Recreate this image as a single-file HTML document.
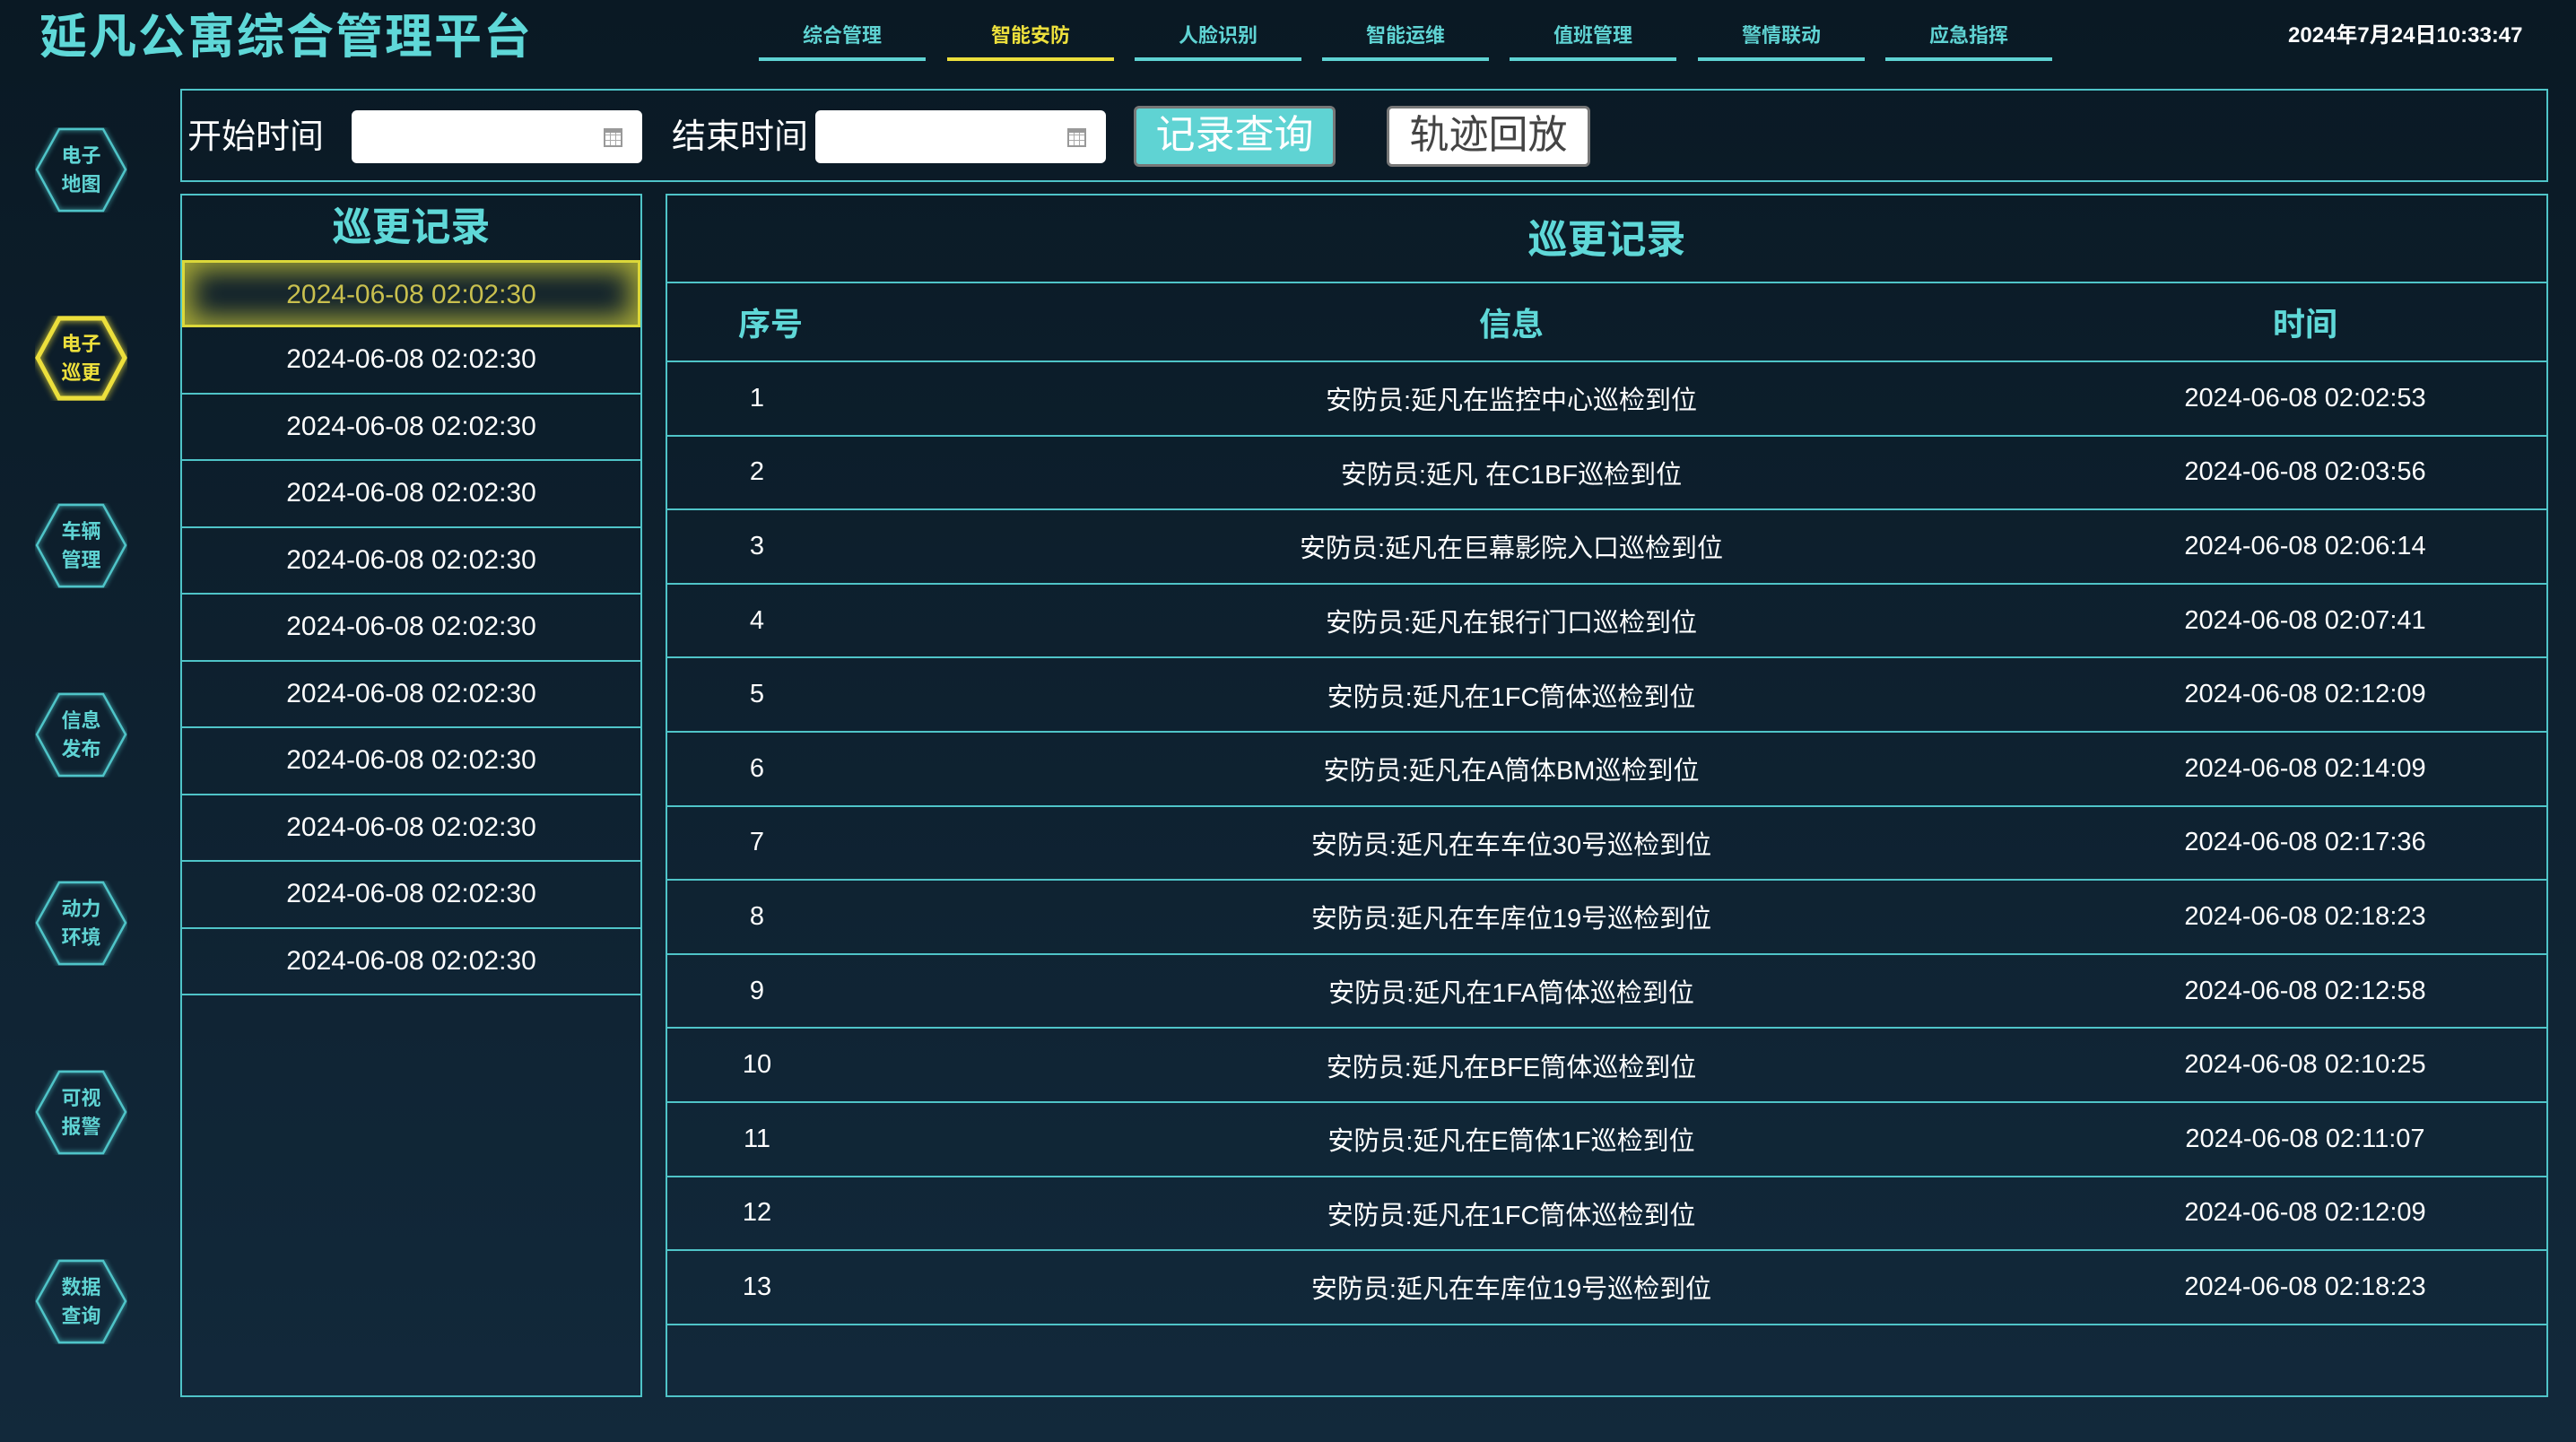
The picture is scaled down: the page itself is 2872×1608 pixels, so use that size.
<!DOCTYPE html>
<html><head><meta charset="utf-8"><style>
*{margin:0;padding:0;box-sizing:border-box}
body{width:2872px;height:1608px;overflow:hidden;background:linear-gradient(#0a1924,#12293b);font-family:"Liberation Sans","Noto Sans CJK SC",sans-serif;color:#fff;position:relative}
.abs{position:absolute}
.title{left:44px;top:10px;font-size:53px;font-weight:bold;color:#5fd8d8;letter-spacing:2px;line-height:64px}
.tab{position:absolute;top:20px;width:186px;height:48px;border-bottom:4px solid #5fd3d3;text-align:center;font-size:22px;font-weight:bold;color:#5fd3d3;line-height:40px}
.tab.on{color:#ecdf3c;border-color:#ecdf3c}
.date{left:2551px;top:24px;font-size:24px;font-weight:bold;line-height:32px}
.qbox{left:201px;top:99px;width:2640px;height:104px;border:2px solid #4fc4c8}
.lbl{position:absolute;top:128px;font-size:38px;line-height:50px;color:#fff}
.inp{position:absolute;top:123px;width:324px;height:59px;background:#fff;border-radius:6px}
.cal{position:absolute;right:22px;top:20px;width:21px;height:21px;border:2px solid #999;border-top-width:5px;background:repeating-linear-gradient(90deg,transparent 0 5px,#aaa 5px 6px),repeating-linear-gradient(0deg,transparent 0 5px,#aaa 5px 6px)}
.btn{position:absolute;top:118px;height:68px;border:3px solid #777;border-radius:6px;font-size:44px;line-height:60px;text-align:center}
.panel{border:2px solid #4fc4c8}
.ptitle{font-size:44px;font-weight:bold;color:#5fd8d8;text-align:center}
.lrow{height:74.5px;border-bottom:2px solid #4fc4c8;text-align:center;font-size:30px;line-height:72px}
.lrow.on{height:75px;border:3px solid #dcd83a;color:#c9c04e;box-shadow:inset 0 0 30px 8px rgba(220,216,58,.75);background:#0e1f2c}
.trow{display:flex;height:82.6px;border-bottom:2px solid #4fc4c8;font-size:29px;align-items:center}
.c1{width:200px;flex:none;text-align:center}
.c2{width:1482px;flex:none;text-align:center}
.c3{width:288px;flex:none;text-align:center;white-space:nowrap}
.hex{position:absolute;left:39px;width:103px;height:95px}
.hex svg{position:absolute;left:0;top:0}
.hex div{position:absolute;left:0;top:0;width:103px;height:95px;display:flex;align-items:center;justify-content:center;text-align:center;font-size:22px;font-weight:bold;line-height:32px;color:#5fd3d3}
</style></head><body>
<div class="abs title">延凡公寓综合管理平台</div>
<div class="tab" style="left:846px">综合管理</div>
<div class="tab on" style="left:1056px">智能安防</div>
<div class="tab" style="left:1265px">人脸识别</div>
<div class="tab" style="left:1474px">智能运维</div>
<div class="tab" style="left:1683px">值班管理</div>
<div class="tab" style="left:1893px">警情联动</div>
<div class="tab" style="left:2102px">应急指挥</div>
<div class="abs date">2024年7月24日10:33:47</div>

<div class="abs qbox"></div>
<div class="lbl" style="left:209px">开始时间</div>
<div class="inp" style="left:392px"><div class="cal"></div></div>
<div class="lbl" style="left:749px">结束时间</div>
<div class="inp" style="left:909px"><div class="cal"></div></div>
<div class="btn" style="left:1264px;width:225px;background:#5fd3d3;color:#fff">记录查询</div>
<div class="btn" style="left:1546px;width:227px;background:#fff;color:#444">轨迹回放</div>

<div class="abs panel" style="left:201px;top:216px;width:515px;height:1342px">
<div class="ptitle" style="height:72px;line-height:72px">巡更记录</div>
<div class="lrow on">2024-06-08 02:02:30</div>
<div class="lrow">2024-06-08 02:02:30</div>
<div class="lrow">2024-06-08 02:02:30</div>
<div class="lrow">2024-06-08 02:02:30</div>
<div class="lrow">2024-06-08 02:02:30</div>
<div class="lrow">2024-06-08 02:02:30</div>
<div class="lrow">2024-06-08 02:02:30</div>
<div class="lrow">2024-06-08 02:02:30</div>
<div class="lrow">2024-06-08 02:02:30</div>
<div class="lrow">2024-06-08 02:02:30</div>
<div class="lrow">2024-06-08 02:02:30</div>
</div>

<div class="abs panel" style="left:742px;top:216px;width:2099px;height:1342px">
<div class="ptitle" style="height:98px;line-height:100px;border-bottom:2px solid #4fc4c8">巡更记录</div>
<div class="trow" style="height:88px;font-size:36px;font-weight:bold;color:#5fd8d8"><div class="c1" style="padding-left:30px">序号</div><div class="c2">信息</div><div class="c3">时间</div></div>
<div class="trow"><div class="c1">1</div><div class="c2">安防员:延凡在监控中心巡检到位</div><div class="c3">2024-06-08 02:02:53</div></div>
<div class="trow"><div class="c1">2</div><div class="c2">安防员:延凡 在C1BF巡检到位</div><div class="c3">2024-06-08 02:03:56</div></div>
<div class="trow"><div class="c1">3</div><div class="c2">安防员:延凡在巨幕影院入口巡检到位</div><div class="c3">2024-06-08 02:06:14</div></div>
<div class="trow"><div class="c1">4</div><div class="c2">安防员:延凡在银行门口巡检到位</div><div class="c3">2024-06-08 02:07:41</div></div>
<div class="trow"><div class="c1">5</div><div class="c2">安防员:延凡在1FC筒体巡检到位</div><div class="c3">2024-06-08 02:12:09</div></div>
<div class="trow"><div class="c1">6</div><div class="c2">安防员:延凡在A筒体BM巡检到位</div><div class="c3">2024-06-08 02:14:09</div></div>
<div class="trow"><div class="c1">7</div><div class="c2">安防员:延凡在车车位30号巡检到位</div><div class="c3">2024-06-08 02:17:36</div></div>
<div class="trow"><div class="c1">8</div><div class="c2">安防员:延凡在车库位19号巡检到位</div><div class="c3">2024-06-08 02:18:23</div></div>
<div class="trow"><div class="c1">9</div><div class="c2">安防员:延凡在1FA筒体巡检到位</div><div class="c3">2024-06-08 02:12:58</div></div>
<div class="trow"><div class="c1">10</div><div class="c2">安防员:延凡在BFE筒体巡检到位</div><div class="c3">2024-06-08 02:10:25</div></div>
<div class="trow"><div class="c1">11</div><div class="c2">安防员:延凡在E筒体1F巡检到位</div><div class="c3">2024-06-08 02:11:07</div></div>
<div class="trow"><div class="c1">12</div><div class="c2">安防员:延凡在1FC筒体巡检到位</div><div class="c3">2024-06-08 02:12:09</div></div>
<div class="trow"><div class="c1">13</div><div class="c2">安防员:延凡在车库位19号巡检到位</div><div class="c3">2024-06-08 02:18:23</div></div>
</div>

<div class="hex" style="top:142px"><svg width="103" height="95"><polygon points="27,2 76,2 101,47 76,93 27,93 2,47" fill="none" stroke="#4fc4c8" stroke-width="2.5" style="filter:drop-shadow(0 0 3px #4fc4c8)"/></svg><div>电子<br>地图</div></div>
<div class="hex" style="top:352px"><svg width="103" height="95"><polygon points="27,3 76,3 100,47 76,92 27,92 3,47" fill="none" stroke="#ecdf3c" stroke-width="5" style="filter:drop-shadow(0 0 4px #ecdf3c)"/></svg><div style="color:#ecdf3c">电子<br>巡更</div></div>
<div class="hex" style="top:561px"><svg width="103" height="95"><polygon points="27,2 76,2 101,47 76,93 27,93 2,47" fill="none" stroke="#4fc4c8" stroke-width="2.5" style="filter:drop-shadow(0 0 3px #4fc4c8)"/></svg><div>车辆<br>管理</div></div>
<div class="hex" style="top:772px"><svg width="103" height="95"><polygon points="27,2 76,2 101,47 76,93 27,93 2,47" fill="none" stroke="#4fc4c8" stroke-width="2.5" style="filter:drop-shadow(0 0 3px #4fc4c8)"/></svg><div>信息<br>发布</div></div>
<div class="hex" style="top:982px"><svg width="103" height="95"><polygon points="27,2 76,2 101,47 76,93 27,93 2,47" fill="none" stroke="#4fc4c8" stroke-width="2.5" style="filter:drop-shadow(0 0 3px #4fc4c8)"/></svg><div>动力<br>环境</div></div>
<div class="hex" style="top:1193px"><svg width="103" height="95"><polygon points="27,2 76,2 101,47 76,93 27,93 2,47" fill="none" stroke="#4fc4c8" stroke-width="2.5" style="filter:drop-shadow(0 0 3px #4fc4c8)"/></svg><div>可视<br>报警</div></div>
<div class="hex" style="top:1404px"><svg width="103" height="95"><polygon points="27,2 76,2 101,47 76,93 27,93 2,47" fill="none" stroke="#4fc4c8" stroke-width="2.5" style="filter:drop-shadow(0 0 3px #4fc4c8)"/></svg><div>数据<br>查询</div></div>
</body></html>
